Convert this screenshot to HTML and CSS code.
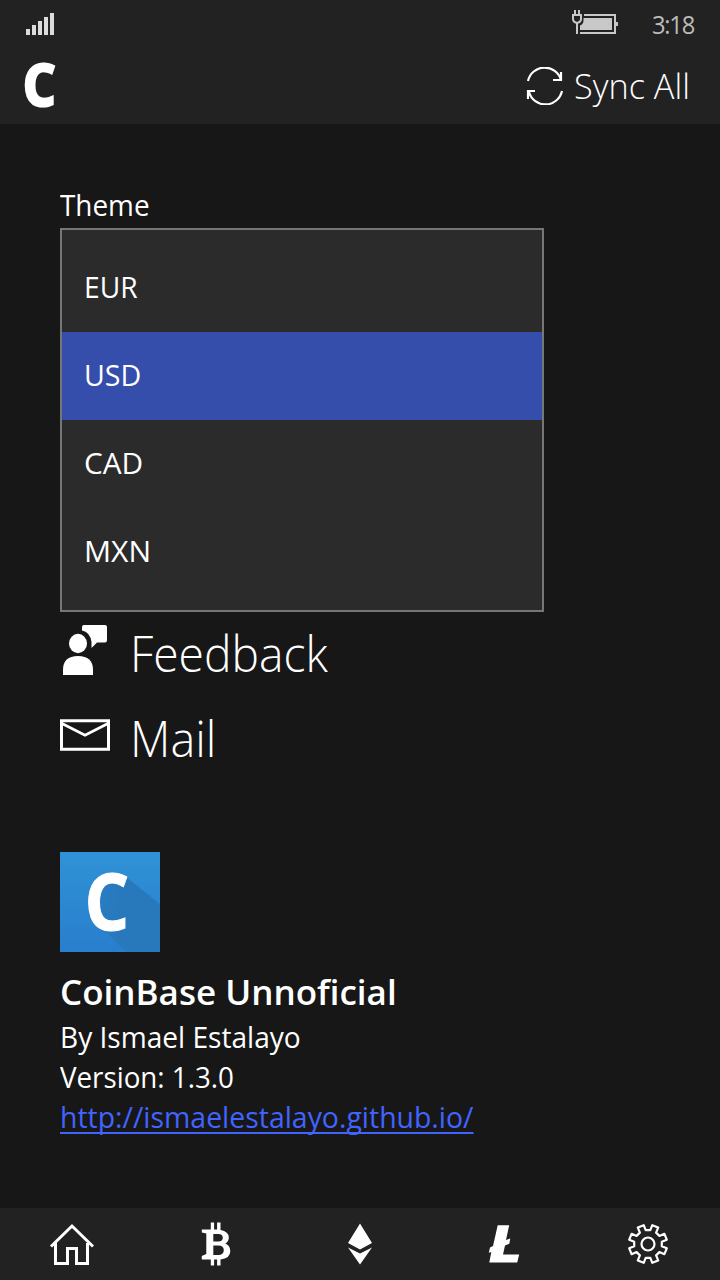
FILE: index.html
```html
<!DOCTYPE html>
<html lang="en">
<head>
<meta charset="utf-8">
<title>CoinBase Unnoficial</title>
<link rel="stylesheet" href="styles.css">
</head>
<body>
<div class="app">
  <header class="top">
    <div class="status">
      <svg class="signal" width="28" height="22" viewBox="0 0 28 22"><path fill="#dcdcdc" d="M0 16h4v6H0zM6 12h4v10H6zM12 8h4v14h-4zM18 4h4v18h-4zM24 0h4v22h-4z"/></svg>
      <svg class="battery" width="46" height="24" viewBox="0 0 46 24">
        <path fill="#c8c8c8" d="M12 4h32v8h2v4h-2v8H8v-2h34V6H12zM11.500 8H40v12H8v-4.500q3.500-1.500 3.500-5z"/>
        <path fill="none" stroke="#c8c8c8" stroke-width="2" d="M3 0v5M7 0v5M0 5h10M1 5v4q0 3 4 4q4-1 4-4V5M5 13v11"/>
      </svg>
      <span class="clock">3:18</span>
    </div>
    <div class="bar">
      <span class="brand">C</span>
      <div class="sync">
        <svg width="38" height="38" viewBox="0 0 38 38" fill="none" stroke="#fff" stroke-width="2.200"><path d="M2 14A17 17 0 0 1 35 13M27 13h8V5M36 24A17 17 0 0 1 3 25M9 24H2v8"/></svg>
        <span class="sync-label">Sync All</span>
      </div>
    </div>
  </header>
  <main class="content">
    <div class="label"><span class="fit theme">Theme</span></div>
    <ul class="options">
      <li><span class="fit eur">EUR</span></li>
      <li class="selected"><span class="fit usd">USD</span></li>
      <li><span class="fit cad">CAD</span></li>
      <li><span class="fit mxn">MXN</span></li>
    </ul>
    <div class="action">
      <svg width="50" height="54" viewBox="0 0 50 54" fill="#fff"><ellipse cx="18" cy="21.500" rx="9" ry="9.700"/><path d="M3 53V48Q3 34 18 34T33 48v5z"/><path d="M22 7V5q0-2 2-2h21q2 0 2 2v13q0 2.500-2 2.500h-8L31.500 26V20Q30 10 22 8.500z"/></svg>
      <span class="fit feedback">Feedback</span>
    </div>
    <div class="action">
      <svg width="50" height="32" viewBox="0 0 50 32" fill="none" stroke="#fff" stroke-width="3"><path d="M1.500 1.800h47v28.400h-47z"/><path stroke-width="2.800" d="M2 4.500l23 11.700L48 4.500"/></svg>
      <span class="fit mail">Mail</span>
    </div>
    <div class="tile">
      <svg width="100" height="100" viewBox="0 0 100 100">
        <defs><linearGradient id="shade" x1="32" x2="60" y1="50" y2="50" gradientUnits="userSpaceOnUse"><stop stop-color="#2878bc" stop-opacity=".6"/><stop offset="1" stop-color="#2878bc"/></linearGradient></defs>
        <path fill="url(#shade)" d="M66 25L100 52V100H66L42 76L34 62V40L44 26z"/>
      </svg>
      <span class="tile-letter">C</span>
    </div>
    <h1 class="title">CoinBase Unnoficial</h1>
    <div class="line"><span class="fit author">By Ismael Estalayo</span></div>
    <div class="line"><span class="fit version">Version: 1.3.0</span></div>
    <div class="line"><a class="fit link" href="#">http://ismaelestalayo.github.io/</a></div>
  </main>
  <nav class="tabs">
    <svg viewBox="0 0 48 48" fill="none" stroke="#fff" stroke-width="3"><path d="M3 26.500L24 6l21 20.500M7.500 23v20.500h12V28.500h9v15h11V23"/></svg>
    <svg viewBox="0 0 48 48" fill="#fff"><path transform="translate(.8 -.5)" fill-rule="evenodd" d="M9 10h9V3h3.300v7h3V3h3.400v7.500Q36 12 36 18q0 4-3.500 6 5 2 5 7.500 0 7.500-9.800 8.500v6h-3.400v-6h-3v6H18v-6H9v-3.500l4.500-2V14L9 13zM20.500 14.500V22h5q4.500 0 4.500-3.700t-4.500-3.800zM20.500 26v9.500h5q5.500 0 5.500-4.700T25.500 26z"/></svg>
    <svg viewBox="0 0 48 48" fill="#fff"><path d="M24 3.500l12 19.500-12 6.500L12 23zM12 27.500l12 6 12-6-12 17z"/></svg>
    <svg viewBox="0 0 48 48" fill="#fff"><path d="M17.700 5.200h11.500L26 20l4.300-1.500-1 5.300-4.300 1.700-2 9H39.200l-2 8H9.300l2-10.500-2.500.7 1.200-5.300 3-1.500z"/></svg>
    <svg viewBox="0 0 48 48" fill="none" stroke="#fff" stroke-width="2.200" stroke-linejoin="round"><circle cx="24" cy="24" r="6.500"/><path d="M19.700 5.200L21.700 10.200H26.300L28.300 5.200L34.200 7.600L32.100 12.600L35.400 15.900L40.400 13.800L42.800 19.700L37.800 21.700V26.300L42.800 28.300L40.400 34.200L35.400 32.100L32.100 35.400L34.200 40.400L28.300 42.800L26.300 37.800H21.700L19.700 42.800L13.800 40.400L15.900 35.400L12.600 32.100L7.600 34.200L5.200 28.300L10.200 26.300V21.700L5.200 19.700L7.600 13.800L12.600 15.900L15.900 12.600L13.800 7.600z"/></svg>
  </nav>
</div>
</body>
</html>
```
FILE: styles.css
```css
* { box-sizing: border-box; }
body { margin: 0; background: #171717; color: #fff; font-family: "Open Sans", "Noto Sans", sans-serif; font-size: 29.5px; }
svg { display: block; flex: none; }
.app { width: 720px; height: 1280px; display: flex; flex-direction: column; white-space: nowrap; }
.top { height: 124px; background: #222; }
.status { height: 48px; display: flex; align-items: flex-start; padding: 0 25px 0 26px; }
.signal { margin-top: 13px; }
.battery { margin: 10px 34px 0 auto; }
.clock { width: 43px; font-size: 25px; line-height: 48px; color: #bcbcbc; letter-spacing: -1.3px; transform: scaleX(.95); transform-origin: left; }
.bar { height: 76px; display: flex; justify-content: space-between; padding: 0 30px 0 22px; }
.brand { font-size: 62px; font-weight: 800; line-height: 71px; transform: scaleX(.87); transform-origin: left; }
.sync { display: flex; width: 164px; gap: 10px; }
.sync svg { margin-top: 19px; }
.sync-label { font-size: 35.5px; font-weight: 300; line-height: 75px; transform: scaleX(.965); transform-origin: left; }
.content { flex: 1; padding: 61px 60px 0; }
.fit { display: inline-block; transform-origin: left; }
.theme { transform: scaleX(.945); }
.eur { transform: scaleX(.955); }
.usd { transform: scaleX(.97); }
.cad { transform: scaleX(1.01); }
.mxn { transform: scaleX(1.02); }
.feedback { transform: scaleX(.943); }
.mail { transform: scaleX(.955); }
.author { transform: scaleX(.952); }
.version { transform: scaleX(.94); }
.label { height: 43px; line-height: 40px; }
.options { width: 484px; height: 384px; margin: 0; padding: 14px 0; list-style: none; background: #2b2b2b; border: 2px solid #767676; }
.options li { height: 88px; padding-left: 22px; line-height: 86px; }
.options .selected { background: #354dab; }
.action { height: 85px; display: flex; align-items: flex-start; gap: 20px; font-size: 49px; font-weight: 300; line-height: 82px; }
.action svg { margin-top: 10px; }
.action + .action svg { margin-top: 22px; }
.tile { display: grid; width: 100px; height: 100px; margin-top: 70px; background: linear-gradient(#2f92d6, #297ecd); }
.tile > * { grid-area: 1 / 1; }
.tile-letter { padding-left: 24px; font-size: 79px; font-weight: 700; line-height: 96px; transform: scaleX(.89); transform-origin: 28px 50%; -webkit-text-stroke: 1px #fff; }
.title { margin: 16px 0 0; height: 48px; line-height: 48px; font-size: 35px; font-weight: 600; }
.line { height: 40px; line-height: 42px; }
.link { color: #4164ff; text-decoration-line: underline; text-decoration-thickness: 2px; text-underline-offset: 4px; text-decoration-skip-ink: none; transform: scaleX(.963); }
.tabs { height: 72px; background: #222; display: grid; grid-template-columns: repeat(5, 144px); align-items: center; justify-items: center; }
.tabs svg { width: 48px; height: 48px; }
```
